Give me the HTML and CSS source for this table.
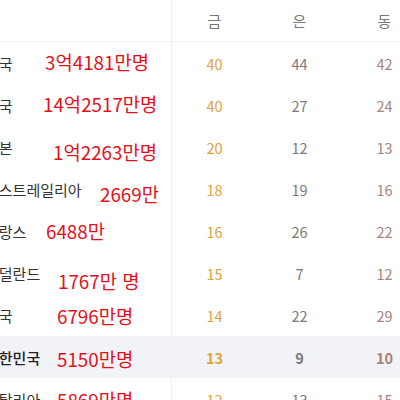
FILE: index.html
```html
<!DOCTYPE html>
<html lang="ko">
<head>
<meta charset="utf-8">
<title>메달 순위</title>
<link rel="stylesheet" href="styles.css">
</head>
<body>
<div class="table">
  <div class="row head">
    <div class="name"></div>
    <div class="c">금</div>
    <div class="c">은</div>
    <div class="c">동</div>
  </div>
  <div class="row">
    <div class="name">미국<span class="pop a1">3억4181만명</span></div>
    <div class="c gold">40</div><div class="c silver">44</div><div class="c bronze">42</div>
  </div>
  <div class="row">
    <div class="name">중국<span class="pop a2">14억2517만명</span></div>
    <div class="c gold">40</div><div class="c silver">27</div><div class="c bronze">24</div>
  </div>
  <div class="row">
    <div class="name">일본<span class="pop a3">1억2263만명</span></div>
    <div class="c gold">20</div><div class="c silver">12</div><div class="c bronze">13</div>
  </div>
  <div class="row">
    <div class="name">오스트레일리아<span class="pop a4">2669만</span></div>
    <div class="c gold">18</div><div class="c silver">19</div><div class="c bronze">16</div>
  </div>
  <div class="row">
    <div class="name">프랑스<span class="pop a5">6488만</span></div>
    <div class="c gold">16</div><div class="c silver">26</div><div class="c bronze">22</div>
  </div>
  <div class="row">
    <div class="name">네덜란드<span class="pop a6">1767만 명</span></div>
    <div class="c gold">15</div><div class="c silver">7</div><div class="c bronze">12</div>
  </div>
  <div class="row">
    <div class="name">영국<span class="pop a7">6796만명</span></div>
    <div class="c gold">14</div><div class="c silver">22</div><div class="c bronze">29</div>
  </div>
  <div class="row mine">
    <div class="name">대한민국<span class="pop a8">5150만명</span></div>
    <div class="c gold">13</div><div class="c silver">9</div><div class="c bronze">10</div>
  </div>
  <div class="row">
    <div class="name">이탈리아<span class="pop a9">5869만명</span></div>
    <div class="c gold">12</div><div class="c silver">13</div><div class="c bronze">15</div>
  </div>
</div>
</body>
</html>
```
FILE: styles.css
```css
html, body {
  margin: 0;
  padding: 0;
  background: #ffffff;
  overflow: hidden;
  width: 400px;
  height: 400px;
}
body {
  font-family: "Noto Sans CJK KR", "Noto Sans", sans-serif;
}
.table {
  margin-left: -15px;
  width: 442px;
}
.row {
  display: grid;
  grid-template-columns: 187px 85px 85px 85px;
  height: 42px;
  position: relative;
}
.row.head {
  height: 41px;
  border-bottom: 1px solid #eeeeee;
}
.name {
  position: relative;
  display: flex;
  align-items: center;
  font-size: 15px;
  color: #333333;
  white-space: nowrap;
  border-right: 1px solid #f0f0f0;
}
.c {
  display: flex;
  align-items: center;
  justify-content: center;
  font-size: 14.5px;
  color: #777777;
}
.head .c {
  font-size: 15px;
  color: #777777;
}
.gold { color: #e2a23e; }
.silver { color: #7a7a7a; }
.bronze { color: #a98379; }
.mine {
  background: #f2f3f7;
}
.mine .name {
  border-right-color: transparent;
  color: #222222;
  font-weight: 500;
}
.mine .c {
  font-weight: 700;
}
.pop {
  position: absolute;
  font-size: 18.8px;
  line-height: 18px;
  color: #e6101a;
  font-weight: 400;
  white-space: pre;
}
.a1 { left: 60px; top: 11px; }
.a2 { left: 58px; top: 11px; }
.a3 { left: 68px; top: 17px; }
.a4 { left: 115px; top: 17px; }
.a5 { left: 61px; top: 12px; }
.a6 { left: 73px; top: 20px; }
.a7 { left: 72px; top: 13px; }
.a8 { left: 72px; top: 14px; }
.a9 { left: 72px; top: 13px; }
```
